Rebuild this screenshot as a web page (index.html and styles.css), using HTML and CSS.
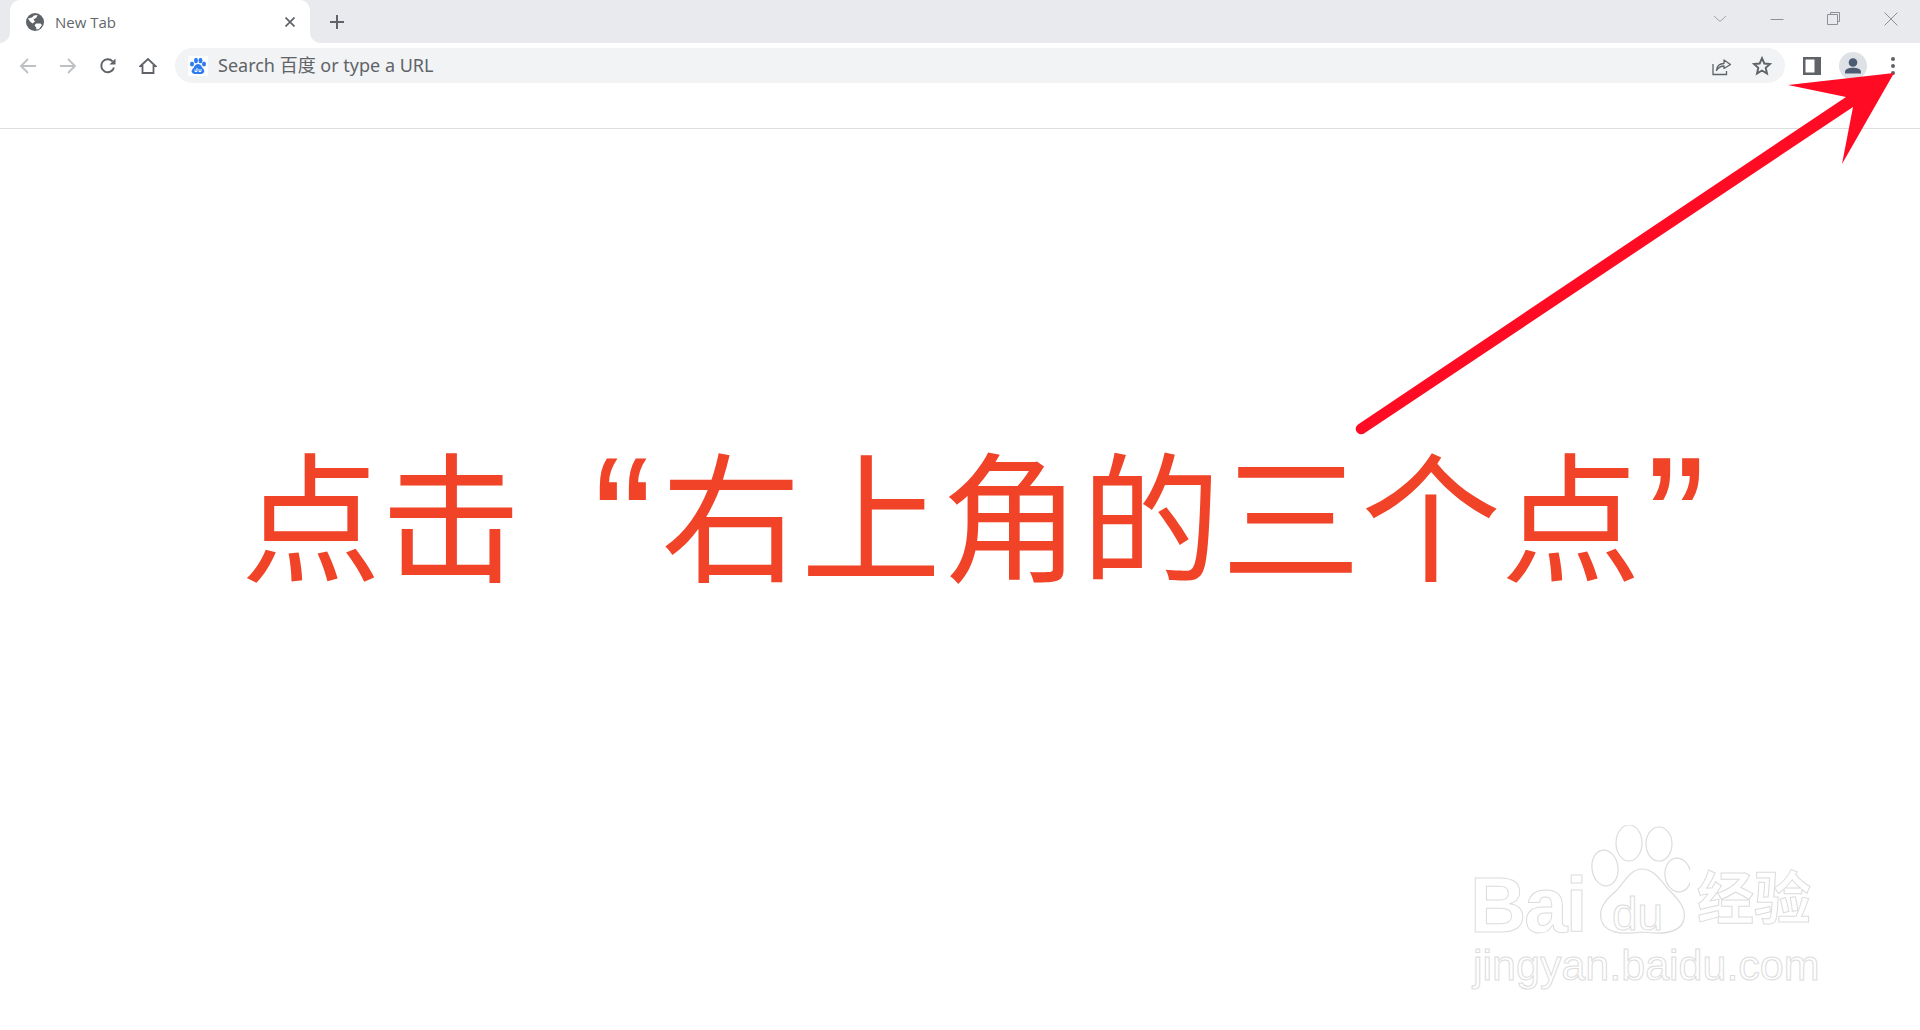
FILE: index.html
```html
<!DOCTYPE html>
<html lang="zh-CN">
<head>
  <meta charset="UTF-8" />
  <title>New Tab</title>
  <link rel="stylesheet" href="styles.css">
</head>
<body>

  <div class="tab-strip">
    <div class="tab">
      <svg class="globe" viewBox="0 0 18 18"><circle cx="9" cy="9" r="9" fill="#5f6368"/><path d="M2 5.5 6 4.5 8 2.5 11.5 2 10.5 4.5 7.5 6.5 9 8.5 6.5 10.5 4 8.5ZM10 10.5 14.500 10.500 16 12 13 16 10.500 16.500 10 14 8.500 12.500Z" fill="#fff"/></svg>
      <span class="tab-title">New Tab</span>
      <svg class="tab-close" viewBox="0 0 10 10"><path d="M.5.5 9.500 9.500M9.500.5.5 9.500" stroke="#5f6368" stroke-width="1.700"/></svg>
    </div>
    <svg class="new-tab" viewBox="0 0 14 14"><path d="M7 0V14M0 7H14" stroke="#5f6368" stroke-width="2"/></svg>
    <div class="window-controls">
      <svg class="win-btn" viewBox="0 0 16 16"><path d="M2 5 8 10.500 14 5" fill="none" stroke="#a2a5a9"/></svg>
      <svg class="win-btn" viewBox="0 0 16 16"><path d="M1.500 8.500H14.500" stroke="#8d9094"/></svg>
      <svg class="win-btn" viewBox="0 0 16 16"><path d="M4.500 3.500V1.500H13.500V10.500H11.500M1.500 3.500H11.500V13.500H1.500Z" fill="none" stroke="#8d9094"/></svg>
      <svg class="win-btn" viewBox="0 0 16 16"><path d="M1.500 1.500 14.500 14.500M14.500 1.500 1.500 14.500" stroke="#8d9094"/></svg>
    </div>
  </div>

  <div class="toolbar">
    <svg class="nav-icon" viewBox="0 0 18 18"><path d="M17 9H2M9 2 2 9 9 16" fill="none" stroke="#bdc0c4" stroke-width="1.800"/></svg>
    <svg class="nav-icon" viewBox="0 0 18 18"><path d="M1 9H16M9 2 16 9 9 16" fill="none" stroke="#bdc0c4" stroke-width="1.800"/></svg>
    <svg class="nav-icon" viewBox="0 0 18 18"><path d="M15 10.500A6.500 6.500 0 1 1 13.600 4.400" fill="none" stroke="#5f6368" stroke-width="1.900"/><path d="M16.500 1.500V7.500H10.500Z" fill="#5f6368"/></svg>
    <svg class="nav-icon" viewBox="0 0 18 18"><path d="M1.500 9 9 2 16.500 9H14.500V16H3.500V9Z" fill="none" stroke="#5f6368" stroke-width="1.800" stroke-linejoin="miter"/></svg>
    <div class="omnibox">
      <svg class="baidu-icon" viewBox="0 0 20 20"><rect width="20" height="20" fill="#fff"/><g fill="#2c7bf0"><ellipse cx="4" cy="8" rx="2" ry="2.500"/><ellipse cx="8" cy="4.500" rx="2" ry="2.700"/><ellipse cx="12.500" cy="4.500" rx="2" ry="2.700"/><ellipse cx="16" cy="8" rx="2" ry="2.500"/><path d="M10 8C7 8 6.500 11 4.500 13 2.500 15.500 4.500 18 7 18 8.500 18 11.500 18 13 18 15.500 18 17.500 15.500 15.500 13 13.500 11 13 8 10 8Z"/></g><path d="M7 13.500V15.500H9V12M11 13V15.500H13V13" fill="none" stroke="#fff" stroke-width="1"/></svg>
      <span class="omni-text">Search 百度 or type a URL</span>
      <svg class="omni-share" viewBox="0 0 20 20"><path d="M1 8V18.500H14.500V15" fill="none" stroke="#5f6368" stroke-width="1.300"/><path d="M4.500 14.500C5 9.500 8 7.500 12 7.500V4L18.500 8.500 12 12.500V10C8.500 10 6.500 11.500 4.500 14.500Z" fill="none" stroke="#5f6368" stroke-width="1.300" stroke-linejoin="round"/></svg>
      <svg class="omni-star" viewBox="0 0 20 20"><path d="M10 2.200 12.300 7.500 18 8 13.700 11.800 15 17.500 10 14.500 5 17.500 6.300 11.800 2 8 7.700 7.500Z" fill="none" stroke="#5f6368" stroke-width="1.900"/></svg>
    </div>
    <svg class="side-panel" viewBox="0 0 18 18"><path fill-rule="evenodd" d="M0 0H18V18H0ZM2.500 2.500V15.500H11.500V2.500Z" fill="#5f6368"/></svg>
    <div class="avatar">
      <svg viewBox="0 0 28 28"><circle cx="14" cy="10.500" r="4.300" fill="#4b5c73"/><path d="M6 20C6 17 10 15.800 14 15.800S22 17 22 20V21.500H6Z" fill="#4b5c73"/></svg>
    </div>
    <div class="menu-dots"><i></i><i></i><i></i></div>
  </div>

  <div class="bookmarks-bar"></div>

  <main class="page">
    <h1 class="headline">点击<span class="quote quote-open">“</span>右上角的三个点<span class="quote quote-close">”</span></h1>
  </main>

  <svg class="arrow" viewBox="0 0 1920 1030">
    <path d="M1358 424.400 1846 97 1788 85 1894 73 1842 164 1853 107 1364 433.600A5.500 5.500 0 0 1 1358 424.400Z" fill="#ff0b23"/>
  </svg>

  <div class="watermark">
    <svg class="paw" viewBox="0 0 100 115">
      <g fill="#fff" stroke="#dcdcdc" stroke-width="1.200">
        <ellipse cx="15" cy="43" rx="13" ry="18" transform="rotate(-8 15 43)"/>
        <ellipse cx="39" cy="18" rx="13" ry="18"/>
        <ellipse cx="69" cy="19" rx="13" ry="17"/>
        <ellipse cx="88" cy="50" rx="13" ry="17" transform="rotate(-8 88 50)"/>
        <path d="M52 44C40 44 34 58 26 66 14 76 9 84 11 94 14 108 30 110 52 107 74 110 91 108 94 94 96 84 90 76 80 66 72 58 65 44 52 44Z"/>
      </g>
    </svg>
    <span class="wm-bai">Bai</span>
    <span class="wm-du">du</span>
    <span class="wm-cn">经验</span>
    <span class="wm-url">jingyan.baidu.com</span>
  </div>

</body>
</html>
```

FILE: styles.css
```css
html, body {
  margin: 0;
  height: 100%;
  background: #fff;
  overflow: hidden;
}

body {
  font-family: "Noto Sans", "Noto Sans CJK SC", sans-serif;
  position: relative;
}

.tab-strip {
  display: flex;
  align-items: center;
  height: 43px;
  background: #e8eaed;
  padding-left: 10px;
}

.tab {
  position: relative;
  display: flex;
  align-items: center;
  width: 300px;
  height: 43px;
  padding: 0 15px 0 16px;
  box-sizing: border-box;
  background: #fff;
  border-radius: 10px 10px 0 0;
}

/* little flares at the foot of the tab */
.tab::before,
.tab::after {
  content: "";
  position: absolute;
  bottom: 0;
  width: 10px;
  height: 10px;
}

.tab::before {
  left: -10px;
  background: radial-gradient(circle at 0 0, #e8eaed 9.5px, #fff 10px);
}

.tab::after {
  right: -10px;
  background: radial-gradient(circle at 100% 0, #e8eaed 9.5px, #fff 10px);
}

.globe {
  width: 18px;
  height: 18px;
  margin-right: 11px;
}

.tab-title {
  flex: 1;
  font-family: "Open Sans", sans-serif;
  font-size: 15px;
  color: #63676b;
}

.tab-close {
  width: 10px;
  height: 10px;
}

.new-tab {
  width: 14px;
  height: 14px;
  margin-left: 20px;
}

.window-controls {
  display: flex;
  align-items: center;
  gap: 41px;
  margin-left: auto;
  margin-right: 21px;
  padding-bottom: 6px;
}

.win-btn {
  width: 16px;
  height: 16px;
}

.toolbar {
  display: flex;
  align-items: center;
  height: 45px;
  padding: 0 0 0 19px;
}

.nav-icon {
  width: 18px;
  height: 18px;
  margin-right: 22px;
}

.omnibox {
  display: flex;
  align-items: center;
  width: 1610px;
  height: 35px;
  margin-left: -4px;
  padding: 0 13px 0 13px;
  box-sizing: border-box;
  background: #f1f3f4;
  border-radius: 18px;
}

.baidu-icon {
  width: 20px;
  height: 20px;
  margin-right: 10px;
}

.omni-text {
  flex: 1;
  padding-bottom: 4px;
  font-size: 18px;
  color: #5f6368;
}

.omni-share {
  width: 20px;
  height: 20px;
  margin-right: 20px;
}

.omni-star {
  width: 20px;
  height: 20px;
}

.side-panel {
  width: 18px;
  height: 18px;
  margin-left: 18px;
}

.avatar {
  width: 28px;
  height: 28px;
  margin-left: 18px;
  border-radius: 50%;
  background: #dee1e6;
}

.avatar svg {
  display: block;
}

.menu-dots {
  display: flex;
  flex-direction: column;
  gap: 3px;
  margin-left: 24px;
}

.menu-dots i {
  display: block;
  width: 4px;
  height: 4px;
  border-radius: 50%;
  background: #5f6368;
}

.bookmarks-bar {
  height: 41px;
  border-bottom: 1px solid #dcdddf;
  box-sizing: border-box;
}

.page {
  padding: 281px 0 0 241px;
}

.headline {
  margin: 0;
  font-family: "Noto Sans CJK SC", sans-serif;
  font-size: 140px;
  font-weight: 400;
  line-height: 200px;
  color: #f04328;
  white-space: nowrap;
}

/* the quotes are tall narrow marks, stretched from a latin font */
.quote {
  display: inline-block;
  width: 1em;
  font-family: "Liberation Sans", sans-serif;
}

.quote-open {
  text-align: right;
  transform: translate(-8px, -17px) scale(1.28, 1.33);
  transform-origin: 100% 25%;
}

.quote-close {
  text-align: left;
  transform: translate(5px, -17px) scale(1.28, 1.33);
  transform-origin: 0 25%;
}

/* overlays: annotation arrow and image watermark */
.arrow {
  position: absolute;
  left: 0;
  top: 0;
  width: 1920px;
  height: 1030px;
}

.watermark {
  position: absolute;
  left: 1470px;
  top: 825px;
  width: 360px;
  height: 170px;
  font-family: "Liberation Sans", "Noto Sans CJK SC", sans-serif;
  color: #fff;
  white-space: nowrap;
  line-height: 1;
  -webkit-text-stroke: 1px #dcdcdc;
}

.paw {
  position: absolute;
  left: 120px;
  top: 0;
  width: 100px;
  height: 115px;
}

.wm-bai {
  position: absolute;
  left: 0;
  top: 41px;
  font-size: 78px;
  font-weight: 700;
  letter-spacing: -2px;
}

.wm-du {
  position: absolute;
  left: 142px;
  top: 66px;
  font-size: 46px;
}

.wm-cn {
  position: absolute;
  left: 227px;
  top: 46px;
  font-size: 57px;
  font-weight: 700;
}

.wm-url {
  position: absolute;
  left: 3px;
  top: 119px;
  font-size: 43px;
}
```
